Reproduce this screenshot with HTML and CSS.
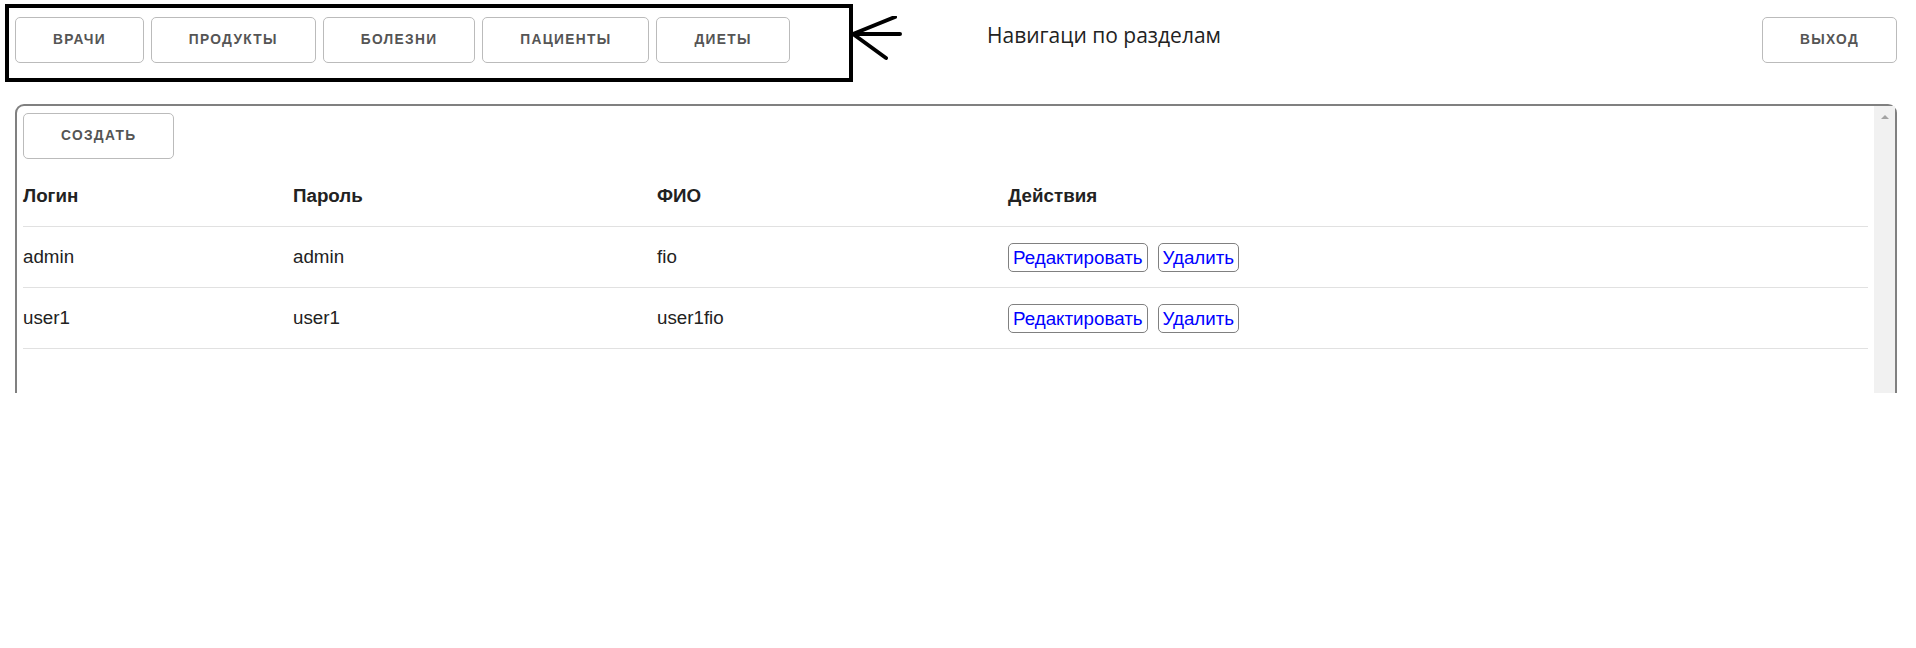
FILE: index.html
```html
<!DOCTYPE html>
<html lang="ru">
<head>
<meta charset="utf-8">
<title>Пользователи</title>
<link rel="stylesheet" href="styles.css">
</head>
<body>
<header class="topbar">
  <nav class="nav">
    <button class="btn">Врачи</button>
    <button class="btn">Продукты</button>
    <button class="btn">Болезни</button>
    <button class="btn">Пациенты</button>
    <button class="btn">Диеты</button>
  </nav>
  <button class="btn btn-logout">Выход</button>
</header>

<div class="annotation">
  <div class="annotation-box"></div>
  <svg class="annotation-arrow" width="60" height="50" viewBox="0 0 60 50" aria-hidden="true">
    <path d="M2 18 L49 18 M2 18 L44 1 M2 18 L35 42" fill="none" stroke="#000" stroke-width="4" stroke-linecap="round" stroke-linejoin="round"/>
  </svg>
  <div class="annotation-label">Навигаци по разделам</div>
</div>

<section class="panel">
  <div class="panel-main">
    <button class="btn btn-create">Создать</button>
    <table class="grid">
      <colgroup>
        <col class="c-login">
        <col class="c-pass">
        <col class="c-fio">
        <col>
      </colgroup>
      <thead>
        <tr><th>Логин</th><th>Пароль</th><th>ФИО</th><th>Действия</th></tr>
      </thead>
      <tbody>
        <tr>
          <td>admin</td><td>admin</td><td>fio</td>
          <td class="actions"><button class="act">Редактировать</button><button class="act">Удалить</button></td>
        </tr>
        <tr>
          <td>user1</td><td>user1</td><td>user1fio</td>
          <td class="actions"><button class="act">Редактировать</button><button class="act">Удалить</button></td>
        </tr>
      </tbody>
    </table>
  </div>
  <div class="scrollbar"><span class="scroll-up"></span></div>
</section>
</body>
</html>
```

FILE: styles.css
```css
* { box-sizing: border-box; }

html, body {
  margin: 0;
  background: #fff;
}

body {
  padding: 17px 19px 0 15px;
  font-family: "Liberation Sans", Arial, sans-serif;
  color: #222;
  position: relative;
  min-height: 648px;
}

.topbar {
  display: flex;
  align-items: flex-start;
  height: 46px;
}

.nav {
  display: flex;
  gap: 7px;
}

.btn {
  height: 46px;
  padding: 0 37px;
  border: 1px solid #bbb;
  border-radius: 5px;
  background: transparent;
  color: #555;
  font-family: "Liberation Sans", Arial, sans-serif;
  font-size: 13.75px;
  font-weight: 700;
  letter-spacing: 1.3px;
  line-height: 44px;
  text-transform: uppercase;
  white-space: nowrap;
  cursor: pointer;
}

.btn-logout {
  margin-left: auto;
}

/* drawn annotation overlay */
.annotation-box {
  position: absolute;
  left: 5px;
  top: 4px;
  width: 848px;
  height: 78px;
  border: 4px solid #000;
  pointer-events: none;
}

.annotation-arrow {
  position: absolute;
  left: 851px;
  top: 16px;
}

.annotation-label {
  position: absolute;
  left: 987px;
  top: 21px;
  font-family: "Open Sans", "Noto Sans", sans-serif;
  font-size: 21px;
  line-height: 28px;
  color: #222;
  white-space: nowrap;
}

/* panel */
.panel {
  margin-top: 41px;
  height: 289px;
  display: flex;
  border: 2px solid #808080;
  border-bottom: none;
  border-radius: 9px 9px 0 0;
}

.panel-main {
  flex: 1;
  padding: 7px 6px 0 6px;
}

.btn-create {
  display: block;
  margin-bottom: 7px;
}

.scrollbar {
  width: 21px;
  background: #f1f1f1;
  display: flex;
  justify-content: center;
  align-items: flex-start;
  padding-top: 9px;
}

.scroll-up {
  width: 0;
  height: 0;
  border-left: 4.5px solid transparent;
  border-right: 4.5px solid transparent;
  border-bottom: 4.5px solid #a3a3a3;
}

.grid {
  width: 100%;
  table-layout: fixed;
  border-collapse: collapse;
  border-spacing: 0;
  font-size: 18.75px;
  line-height: 30px;
}

.c-login { width: 251px; }
.c-pass { width: 364px; }
.c-fio { width: 351px; }

.grid th,
.grid td {
  padding: 15px 19px;
  text-align: left;
  border-bottom: 1px solid #e1e1e1;
  white-space: nowrap;
}

.grid th { font-weight: 700; color: #222; }
.grid td { font-weight: 400; color: #222; }

.grid th:first-child,
.grid td:first-child { padding-left: 0; }

.actions {
  font-size: 0;
}

.act {
  display: inline-block;
  vertical-align: middle;
  height: 29px;
  margin-right: 10px;
  padding: 0 4px;
  border: 1px solid #808080;
  border-radius: 5px;
  background: #fff;
  color: #0000ff;
  font-family: "Liberation Sans", Arial, sans-serif;
  font-size: 18.75px;
  line-height: 27px;
  cursor: pointer;
}
```
